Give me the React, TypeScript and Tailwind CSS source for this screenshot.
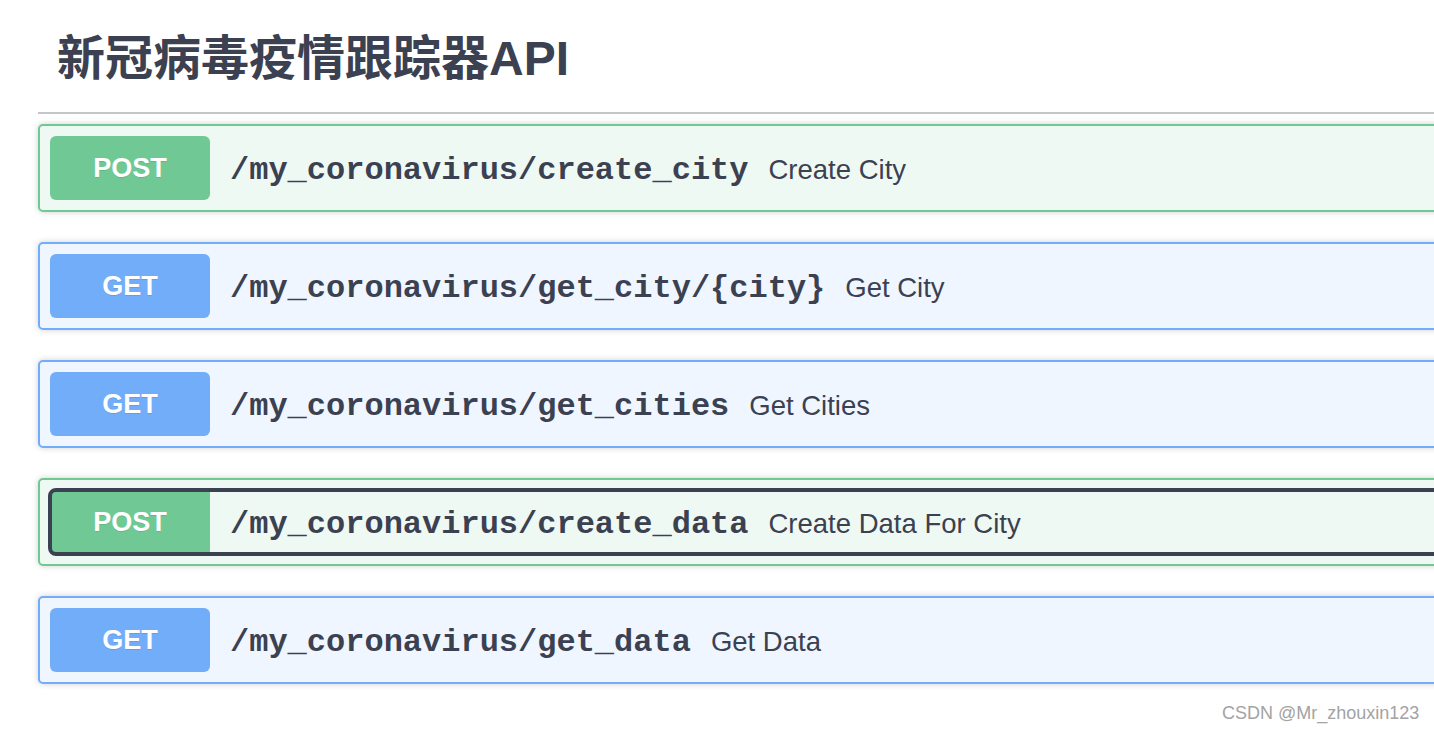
import React from "react";

type Op = { method: "POST" | "GET"; path: string; desc: string; focused?: boolean };

const ops: Op[] = [
  { method: "POST", path: "/my_coronavirus/create_city", desc: "Create City" },
  { method: "GET", path: "/my_coronavirus/get_city/{city}", desc: "Get City" },
  { method: "GET", path: "/my_coronavirus/get_cities", desc: "Get Cities" },
  { method: "POST", path: "/my_coronavirus/create_data", desc: "Create Data For City", focused: true },
  { method: "GET", path: "/my_coronavirus/get_data", desc: "Get Data" },
];

function OpBlock({ op }: { op: Op }) {
  const post = op.method === "POST";
  return (
    <div
      className={
        "w-[1420px] h-[88px] rounded-[5px] border-2 px-[10px] py-[10px] shadow-[0_0_6px_rgba(0,0,0,0.19)] " +
        (post ? "border-[#70c995] bg-[#eff9f4]" : "border-[#71adf8] bg-[#eff6ff]")
      }
    >
      <div className="relative flex items-center h-[64px]">
        <div
          className={
            "w-[160px] h-[64px] flex items-center justify-center text-white font-bold text-[27px] shrink-0 " +
            (op.focused ? "rounded-l-[6px] " : "rounded-[6px] ") +
            (post ? "bg-[#70c995]" : "bg-[#71adf8]")
          }
          style={{ fontFamily: '"Liberation Sans", Arial, sans-serif', textShadow: "0 1px 0 rgba(0,0,0,0.1)" }}
        >
          {op.method}
        </div>
        <div
          className="pl-[20px] pt-[5px] text-[32px] font-bold text-[#3b4151] whitespace-nowrap"
          style={{ fontFamily: '"Liberation Mono", "Courier New", monospace' }}
        >
          {op.path}
        </div>
        <div
          className="pl-[20px] pt-[4px] text-[27.5px] text-[#3b4151] whitespace-nowrap"
          style={{ fontFamily: '"Liberation Sans", Arial, sans-serif' }}
        >
          {op.desc}
        </div>
        {op.focused && (
          <div className="absolute left-[-2px] top-[-2px] bottom-[-2px] right-[-40px] border-4 border-[#3b4151] rounded-[8px] pointer-events-none" />
        )}
      </div>
    </div>
  );
}

export default function App() {
  return (
    <div className="relative w-[1434px] h-[730px] overflow-hidden bg-white">
      <div className="pl-[38px] w-[1460px]">
        <div className="h-[112px] flex items-center pl-[19px] pt-[6px]">
          <h2
            className="text-[48px] font-bold text-[#3b4151] leading-none"
            style={{ fontFamily: '"Liberation Sans", "Noto Sans CJK SC", sans-serif' }}
          >
            新冠病毒疫情跟踪器API
          </h2>
        </div>
        <div className="h-[2px] bg-[#c6c6ca]" />
        <div className="mt-[10px] flex flex-col gap-[30px]">
          {ops.map((op, i) => (
            <OpBlock key={i} op={op} />
          ))}
        </div>
      </div>
      <div
        className="absolute left-[1222px] top-[700px] text-[18px] text-[#a3a3a3] whitespace-nowrap"
        style={{ fontFamily: '"Liberation Sans", Arial, sans-serif' }}
      >
        CSDN @Mr_zhouxin123
      </div>
    </div>
  );
}
